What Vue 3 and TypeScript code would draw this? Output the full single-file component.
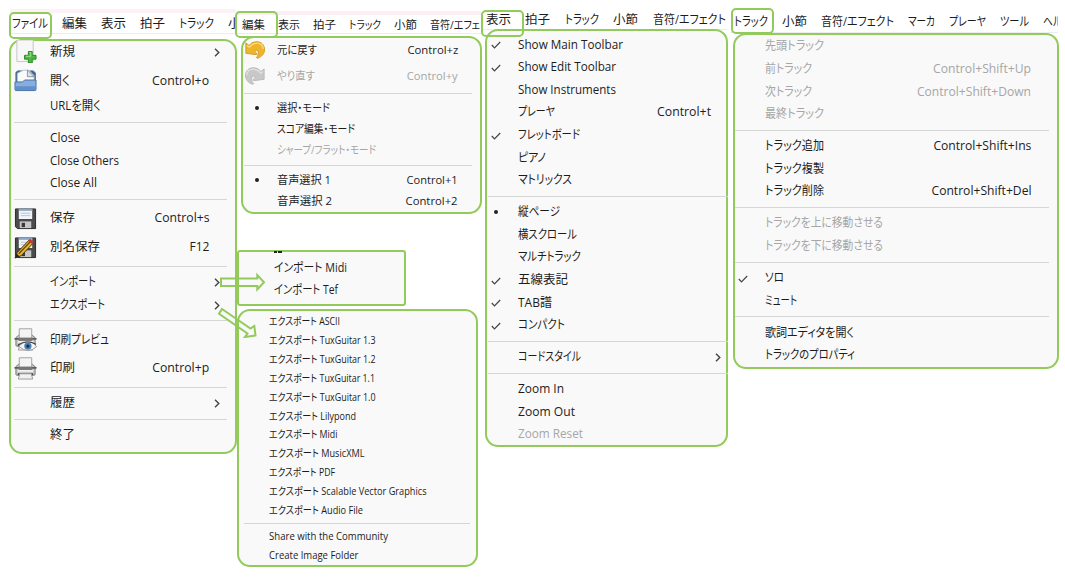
<script setup lang="ts">
type Entry = {
  text?: string
  w?: number
  key?: string
  kw?: number
  icon?: string
  mark?: 'check' | 'dot'
  sub?: boolean
  off?: boolean
  sep?: boolean
}
type Word = [string, number]
type Menu = { id: string; bar?: Word[]; items: Entry[] }

// Squeezes or stretches a label to its design width.
const vFit = {
  mounted(el: HTMLElement, binding: { value?: number }) {
    if (!binding.value) return
    const natural = el.getBoundingClientRect().width
    el.style.transform = `scaleX(${(binding.value + 1) / natural})`
    const right = el.classList.contains('key')
    if (!right) el.style.marginRight = `${binding.value - natural}px`
  },
}

const line: Entry = { sep: true }

const fileMenu: Menu = {
  id: 'file',
  bar: [['ファイル', 35], ['編集', 24], ['表示', 24], ['拍子', 24], ['トラック', 34], ['小節', 24]],
  items: [
    { text: '新規', w: 24, icon: 'new', sub: true },
    { text: '開く', w: 19, icon: 'open', key: 'Control+o', kw: 56 },
    { text: 'URLを開く', w: 50 },
    line,
    { text: 'Close', w: 29 },
    { text: 'Close Others', w: 68 },
    { text: 'Close All', w: 46 },
    line,
    { text: '保存', w: 24, icon: 'save', key: 'Control+s', kw: 54 },
    { text: '別名保存', w: 49, icon: 'saveas', key: 'F12', kw: 19 },
    line,
    { text: 'インポート', w: 45, sub: true },
    { text: 'エクスポート', w: 54, sub: true },
    line,
    { text: '印刷プレビュ', w: 58, icon: 'preview' },
    { text: '印刷', w: 24, icon: 'print', key: 'Control+p', kw: 56 },
    line,
    { text: '履歴', w: 24, sub: true },
    line,
    { text: '終了', w: 24 },
  ],
}

const editMenu: Menu = {
  id: 'edit',
  bar: [['編集', 22], ['表示', 21], ['拍子', 22], ['トラック', 31], ['小節', 22], ['音符/エフェ', 49]],
  items: [
    { text: '元に戻す', w: 39, icon: 'undo', key: 'Control+z', kw: 50 },
    { text: 'やり直す', w: 37, icon: 'redo', key: 'Control+y', kw: 50, off: true },
    line,
    { text: '選択・モード', w: 52, mark: 'dot' },
    { text: 'スコア編集・モード', w: 77 },
    { text: 'シャープ/フラット・モード', w: 98, off: true },
    line,
    { text: '音声選択 1', w: 53, mark: 'dot', key: 'Control+1', kw: 50 },
    { text: '音声選択 2', w: 54, key: 'Control+2', kw: 51 },
  ],
}

const importMenu: Menu = {
  id: 'import',
  items: [{ text: 'インポート Midi', w: 72 }, { text: 'インポート Tef', w: 63 }],
}

const exportMenu: Menu = {
  id: 'export',
  items: [
    { text: 'エクスポート ASCII', w: 70 },
    { text: 'エクスポート TuxGuitar 1.3', w: 105.500 },
    { text: 'エクスポート TuxGuitar 1.2', w: 105.500 },
    { text: 'エクスポート TuxGuitar 1.1', w: 105 },
    { text: 'エクスポート TuxGuitar 1.0', w: 105.500 },
    { text: 'エクスポート Lilypond', w: 86 },
    { text: 'エクスポート Midi', w: 67.500 },
    { text: 'エクスポート MusicXML', w: 94.500 },
    { text: 'エクスポート PDF', w: 65 },
    { text: 'エクスポート Scalable Vector Graphics', w: 156.500 },
    { text: 'エクスポート Audio File', w: 93 },
    line,
    { text: 'Share with the Community', w: 118 },
    { text: 'Create Image Folder', w: 88.500 },
  ],
}

const viewMenu: Menu = {
  id: 'view',
  bar: [['表示', 24], ['拍子', 24], ['トラック', 33], ['小節', 24], ['音符/エフェクト', 72]],
  items: [
    { text: 'Show Main Toolbar', w: 104, mark: 'check' },
    { text: 'Show Edit Toolbar', w: 97, mark: 'check' },
    { text: 'Show Instruments', w: 97 },
    { text: 'プレーヤ', w: 36, key: 'Control+t', kw: 53 },
    { text: 'フレットボード', w: 61, mark: 'check' },
    { text: 'ピアノ', w: 27 },
    { text: 'マトリックス', w: 53 },
    line,
    { text: '縦ページ', w: 41, mark: 'dot' },
    { text: '横スクロール', w: 58 },
    { text: 'マルチトラック', w: 62 },
    { text: '五線表記', w: 49, mark: 'check' },
    { text: 'TAB譜', w: 33, mark: 'check' },
    { text: 'コンパクト', w: 46, mark: 'check' },
    line,
    { text: 'コードスタイル', w: 62, sub: true },
    line,
    { text: 'Zoom In', w: 45 },
    { text: 'Zoom Out', w: 56 },
    { text: 'Zoom Reset', w: 64, off: true },
  ],
}

const trackMenu: Menu = {
  id: 'track',
  bar: [['トラック', 33], ['小節', 24], ['音符/エフェクト', 72], ['マーカ', 26], ['プレーヤ', 36], ['ツール', 28], ['ヘル', 18]],
  items: [
    { text: '先頭トラック', w: 58, off: true },
    { text: '前トラック', w: 46, off: true, key: 'Control+Shift+Up', kw: 97 },
    { text: '次トラック', w: 46, off: true, key: 'Control+Shift+Down', kw: 113 },
    { text: '最終トラック', w: 58, off: true },
    line,
    { text: 'トラック追加', w: 58, key: 'Control+Shift+Ins', kw: 97 },
    { text: 'トラック複製', w: 58 },
    { text: 'トラック削除', w: 58, key: 'Control+Shift+Del', kw: 99 },
    line,
    { text: 'トラックを上に移動させる', w: 117, off: true },
    { text: 'トラックを下に移動させる', w: 117, off: true },
    line,
    { text: 'ソロ', w: 18, mark: 'check' },
    { text: 'ミュート', w: 31 },
    line,
    { text: '歌詞エディタを開く', w: 88 },
    { text: 'トラックのプロパティ', w: 89 },
  ],
}

const columns: Menu[][] = [[fileMenu], [editMenu, importMenu, exportMenu], [viewMenu], [trackMenu]]
</script>

<template>
  <main class="board">
    <section v-for="(col, c) in columns" :key="c" class="column" :class="'col-' + col[0].id">
      <template v-for="menu in col" :key="menu.id">
        <nav v-if="menu.bar" class="bar">
          <span v-for="(word, i) in menu.bar" :key="i" v-fit="word[1]" class="word">{{ word[0] }}</span>
        </nav>
        <i v-if="menu.bar" class="tab"></i>
        <div class="menu" :class="menu.id">
          <ul class="list">
            <li
              v-for="(item, i) in menu.items"
              :key="i"
              :class="{ sep: item.sep, row: !item.sep, tall: item.icon, off: item.off }"
            >
              <template v-if="!item.sep">
                <span class="gutter">
                  <svg v-if="item.mark === 'check'" class="check" viewBox="0 0 10 8"><path d="M.8 4 3.500 6.800 9.200 1" /></svg>
                  <i v-if="item.mark === 'dot'" class="dot"></i>
                  <svg v-if="item.icon" class="icon" :class="item.icon" viewBox="0 0 24 24">
                    <g v-if="item.icon === 'new'">
                      <path d="M3 0H20V22.500H3Z" fill="#f7f7f7" stroke="#c4c4c4" />
                      <path d="M15 12h4v4h4v4h-4v4h-4v-4h-4v-4h4Z" fill="#4fb840" stroke="#278a24" />
                      <path d="M16 13h1.500v4h-5" fill="none" stroke="#a5e294" />
                    </g>
                    <g v-else-if="item.icon === 'open'">
                      <path d="M2 3.500 4 2h16l2.300 2v9H2Z" fill="#41648f" stroke="#466f9f" />
                      <path d="M3.500 14V4.500L10 1.200h5.500L21 7v7Z" fill="#fafafa" stroke="#b8c2cf" stroke-width=".8" />
                      <path d="M14 1.200V8h7Z" fill="#dde3e9" stroke="#6f7f92" stroke-width=".8" />
                      <path d="M1 13.500h8l2-2h12v9.800q0 1.200-1.200 1.200H2.200Q1 22.500 1 21.300Z" fill="#86afe0" stroke="#466f9f" />
                      <path d="M1.500 18h21v4h-21Z" fill="#628fc9" />
                    </g>
                    <g v-else-if="item.icon === 'save' || item.icon === 'saveas'">
                      <path d="M1.500 2h21v20.500H3.500l-2-2Z" fill="#4b4b4e" stroke="#29292b" />
                      <path d="M5 2h14v10.500H5Z" fill="#f1f5f9" />
                      <path d="M5 2h14v2H5Z" fill="#87a7c6" />
                      <path d="M7 6.500h10M7 9h10" stroke="#b3c4d3" />
                      <path d="M6 15h12v7H6Z" fill="#c6c6c5" />
                      <path d="M8 16.500h3.500V21H8Z" fill="#39393b" />
                      <g v-if="item.icon === 'saveas'">
                        <path d="m1 23 2.500-6L16 4l4 3.500L7.500 20.500Z" fill="#e4b83c" stroke="#3c2b0a" />
                        <path d="m5 18.500 12-12.500" stroke="#6b4a0d" stroke-width="1.400" />
                        <path d="m15 5 2-2 4 3.500-2 2Z" fill="#d42e28" />
                        <path d="m1 23 2-4.500 2.500 2.500Z" fill="#222" />
                      </g>
                    </g>
                    <g v-else-if="item.icon === 'preview' || item.icon === 'print'">
                      <path d="M2 10 5 7.500h14l3 2.500v8q0 1-1 1H3q-1 0-1-1Z" fill="#c9c9c9" stroke="#777" />
                      <path d="M.5 10.500h23v1.700H.5Z" fill="#555" />
                      <path d="M5.500.8h13V11h-13Z" fill="#f4f4f4" stroke="#a1a1a1" />
                      <path d="M5 10h14v3.500H5Z" fill="#777" />
                      <path d="M4 14.500h16" stroke="#f8f8f8" stroke-width="1.600" />
                      <path d="M4 17h16v2H4Z" fill="#444" />
                      <path d="M6 17.500h12l1.500 5.500h-15Z" fill="#f1f1f1" stroke="#999" />
                      <g v-if="item.icon === 'preview'">
                        <path d="M5 19q4.500-5.500 10-5t8.500 5.500q-4 4-9 4T5 19Z" fill="#f4f5f6" stroke="#999" />
                        <path d="M4.500 17.500Q13 12 23 17" fill="none" stroke="#444" stroke-width="1.200" />
                        <circle cx="14.500" cy="18.800" r="3.800" fill="#4a7fb5" />
                        <circle cx="14.500" cy="18.800" r="1.700" fill="#17304d" />
                      </g>
                    </g>
                    <g v-else :class="{ flip: item.icon === 'redo' }">
                      <path
                        d="M1 3.500 5 6.500Q8 2 14 2c5.500 0 9.500 4 9.500 9.500 0 4.500-3 8.500-8.500 10.500l-1.500-1c2.500-2 3.300-5 2.300-7-.8-1.600-2.500-1.800-4.300-.5L15 17l-3 .5L1 16Z"
                        :fill="item.icon === 'undo' ? '#edb52c' : '#c8c8c8'"
                        :stroke="item.icon === 'undo' ? '#d3931c' : '#b5b5b5'"
                      />
                      <path
                        d="M2.300 6.500 5.300 8.700Q9 3.700 14 3.700c4.500 0 7.500 3 8 7"
                        fill="none"
                        :stroke="item.icon === 'undo' ? '#fbdf78' : '#e2e2e2'"
                        stroke-width="1.500"
                      />
                    </g>
                  </svg>
                </span>
                <span v-fit="item.w" class="label">{{ item.text }}</span>
                <span v-if="item.key" v-fit="item.kw" class="key">{{ item.key }}</span>
                <svg v-if="item.sub" class="chevron" viewBox="0 0 6 9"><path d="M1 .8 4.800 4.500 1 8.200" /></svg>
              </template>
            </li>
          </ul>
        </div>
      </template>
    </section>
    <svg class="arrows" viewBox="0 0 1065 581">
      <path d="M221 278.500H257.300V275L264 282.300 257.300 289.500V286H221Z" />
      <path d="M222 309 250.500 328.500 254.300 326 255.500 335.500 245 337 247.500 333.500 219 313.700Z" />
    </svg>
  </main>
</template>

<style>
body {
  margin: 0;
  background: #fff;
}
</style>

<style scoped>
.board {
  --green: #92cb5b;
  position: relative;
  display: flex;
  width: 1065px;
  height: 581px;
  overflow: hidden;
  background: #fff;
  color: #1c1c1c;
  font-family: 'Open Sans', 'Noto Sans CJK JP', sans-serif;
  font-size: 12.3px;
  font-feature-settings: 'palt';
}
.column {
  position: relative;
  flex: none;
  height: 581px;
}
.col-file { width: 236px; }
.col-edit { width: 245px; font-size: 11.2px; }
.col-view { width: 249px; }
.col-track { width: 335px; }

.bar {
  display: flex;
  align-items: center;
  gap: 15px;
  box-sizing: border-box;
  overflow: hidden;
  white-space: nowrap;
  background: #fff;
  border-bottom: 1px solid #ededed;
}
.word {
  flex: none;
  line-height: 18px;
  transform-origin: left center;
}
.col-file .bar { height: 25px; margin: 9px 0 0 10px; padding: 2px 0 0 1.500px; border-top: 4px solid #fbf1f7; }
.col-edit .bar { height: 23px; margin: 11px 0 0; padding: 1px 0 0 6px; gap: 14.100px; border-top: 4px solid #fbeff5; }
.col-view .bar { height: 20px; margin: 10px 3px 0 0; padding: 1px 0 0 4.500px; gap: 15.500px; }
.col-track .bar { height: 22px; margin: 11px 7px 0 0; padding: 1px 0 0 3.500px; }

.tab {
  position: absolute;
  z-index: 2;
  box-sizing: border-box;
  width: 43px;
  height: 27px;
  border: 2px solid var(--green);
  border-radius: 5px;
}
.col-file .tab { left: 9px; top: 12px; }
.col-edit .tab { left: -1px; top: 11px; }
.col-view .tab { left: 0; top: 10px; }
.col-track .tab { left: 1px; top: 8px; height: 26px; }

.menu {
  --row: 22.600px;
  --tall: 28.700px;
  --gap: 9.400px;
  position: relative;
  box-sizing: border-box;
  border: 2px solid var(--green);
  border-radius: 13px;
  background: #f9f9f9;
}
.list {
  margin: 0;
  padding: 0;
  list-style: none;
}
.file { width: 228px; height: 415px; margin: 5px 0 0 9px; --in: 39px; --end: 26px; --sl: 3px; --sr: 8px; --ic: 3px; }
.file .list { margin-top: -3.500px; }
.edit { width: 241px; height: 178px; margin: 2px 0 0 5px; --row: 21px; --tall: 26.700px; --gap: 8.300px; --in: 34px; --end: 22px; --sl: 1px; --sr: 8px; --ic: 1px; }
.edit .list { margin-top: -1.800px; }
.import { width: 169px; height: 56px; margin: 36px 0 0 1px; border-radius: 3px; font-size: 12.300px; --in: 35px; }
.import .list { margin-top: 4.500px; }
.import::before {
  content: '';
  position: absolute;
  left: 35px;
  top: -1px;
  width: 8px;
  height: 2px;
  background: linear-gradient(90deg, #222 3px, transparent 3px 4px, #222 4px);
}
.export { width: 241px; height: 258px; margin: 3px 0 0 1px; --row: 18.850px; --gap: 7.800px; --in: 30px; --sl: 5px; --sr: 6px; font-size: 10.300px; }
.export .list { margin-top: .900px; }
.view { width: 243px; height: 418px; margin: -1px 0 0 4px; --in: 31px; --end: 15px; --sl: 1px; --sr: -2px; --ic: 4px; }
.view .list { margin-top: 2.400px; }
.track { width: 326px; height: 336px; margin: 0 0 0 3px; --in: 30px; --end: 26px; --sl: 0px; --sr: 8px; --ic: 3px; }
.track .list { margin-top: .200px; }

.row {
  position: relative;
  display: flex;
  align-items: center;
  height: var(--row);
  padding-right: var(--end);
  white-space: nowrap;
}
.row.tall { height: var(--tall); }
.off { color: #a6a6a6; }
.gutter {
  display: flex;
  flex: none;
  box-sizing: border-box;
  width: var(--in);
  padding-left: var(--ic, 0);
}
.label {
  line-height: 18px;
  transform-origin: left center;
}
.key {
  margin-left: auto;
  line-height: 18px;
  transform-origin: right center;
}
.sep {
  display: flex;
  align-items: center;
  height: var(--gap);
  margin: 0 var(--sr) 0 var(--sl);
}
.sep::before {
  content: '';
  flex: 1;
  height: 1px;
  background: #d6d6d6;
}
.icon {
  width: 23px;
  height: 23px;
}
.undo, .redo { width: 22px; height: 20px; }
.flip { transform: translateX(24px) scaleX(-1); }
.check { width: 10px; height: 8px; margin-top: 1px; }
.check path, .chevron path { fill: none; stroke: #444; stroke-width: 1.200; }
.dot {
  width: 4px;
  height: 4px;
  border-radius: 50%;
  background: #222;
  margin-left: 4px;
}
.edit .dot { margin-left: 11px; }
.view .dot { margin-left: 3px; }
.chevron {
  position: absolute;
  right: 15px;
  top: calc(50% - 4px);
  width: 6px;
  height: 9px;
}
.view .chevron { right: 5px; }
.chevron path { stroke-width: 1.400; }
.arrows {
  position: absolute;
  inset: 0;
  z-index: 3;
  width: 1065px;
  height: 581px;
  fill: none;
  stroke: var(--green);
  stroke-width: 2;
}
</style>
